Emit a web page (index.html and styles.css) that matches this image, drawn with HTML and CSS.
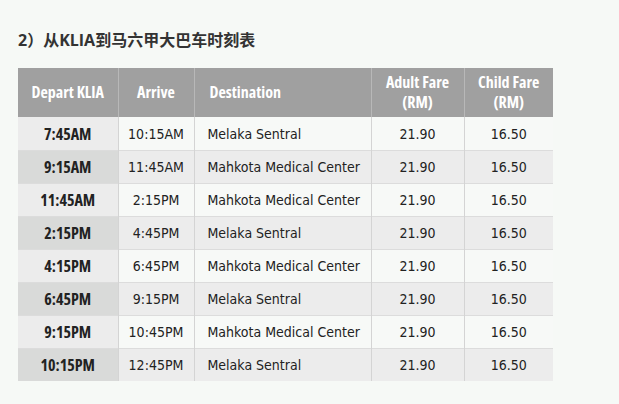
FILE: index.html
```html
<!DOCTYPE html>
<html lang="zh">
<head>
<meta charset="utf-8">
<link rel="stylesheet" href="styles.css">
</head>
<body>
<h2 class="title">2）从KLIA到马六甲大巴车时刻表</h2>
<table class="sched">
  <colgroup>
    <col class="c1"><col class="c2"><col class="c3"><col class="c4"><col class="c5">
  </colgroup>
  <thead>
    <tr>
      <th>Depart KLIA</th>
      <th>Arrive</th>
      <th class="left">Destination</th>
      <th>Adult Fare<br>(RM)</th>
      <th>Child Fare<br>(RM)</th>
    </tr>
  </thead>
  <tbody>
    <tr><td class="dep">7:45AM</td><td>10:15AM</td><td class="left">Melaka Sentral</td><td>21.90</td><td>16.50</td></tr>
    <tr><td class="dep">9:15AM</td><td>11:45AM</td><td class="left">Mahkota Medical Center</td><td>21.90</td><td>16.50</td></tr>
    <tr><td class="dep">11:45AM</td><td>2:15PM</td><td class="left">Mahkota Medical Center</td><td>21.90</td><td>16.50</td></tr>
    <tr><td class="dep">2:15PM</td><td>4:45PM</td><td class="left">Melaka Sentral</td><td>21.90</td><td>16.50</td></tr>
    <tr><td class="dep">4:15PM</td><td>6:45PM</td><td class="left">Mahkota Medical Center</td><td>21.90</td><td>16.50</td></tr>
    <tr><td class="dep">6:45PM</td><td>9:15PM</td><td class="left">Melaka Sentral</td><td>21.90</td><td>16.50</td></tr>
    <tr><td class="dep">9:15PM</td><td>10:45PM</td><td class="left">Mahkota Medical Center</td><td>21.90</td><td>16.50</td></tr>
    <tr><td class="dep">10:15PM</td><td>12:45PM</td><td class="left">Melaka Sentral</td><td>21.90</td><td>16.50</td></tr>
  </tbody>
</table>
</body>
</html>
```
FILE: styles.css
```css
html, body {
  margin: 0;
  padding: 0;
  background: #f6f9f6;
}
body {
  padding: 30px 0 0 18px;
  font-family: "DejaVu Sans Condensed", "DejaVu Sans", sans-serif;
  color: #222;
}
.title {
  margin: 0 0 18px 0;
  font-family: "Open Sans", "Noto Sans CJK SC", sans-serif;
  font-size: 16px;
  line-height: 20px;
  font-weight: 700;
  color: #333;
}
.sched {
  border-collapse: collapse;
  table-layout: fixed;
  width: 535px;
}
.c1 { width: 100px; }
.c2 { width: 76px; }
.c3 { width: 177px; }
.c4 { width: 93px; }
.c5 { width: 89px; }
.sched th {
  background: #a0a0a0;
  color: #fff;
  font-family: "Open Sans", sans-serif;
  font-stretch: 75%;
  font-weight: 700;
  font-size: 16px;
  line-height: 20px;
  height: 47px;
  padding: 0 0 2px 0;
  text-align: center;
  border-left: 1px solid #b8b8b8;
  border-right: 1px solid #b8b8b8;
}
.sched th:first-child { border-left: none; }
.sched th:last-child { border-right: none; }
.sched td {
  height: 32px;
  padding: 0;
  text-align: center;
  font-size: 14px;
  color: #222;
  background: #f7f9f7;
  border-top: 1px solid #dcdcdc;
  border-left: 1px solid #d4d4d4;
  border-right: 1px solid #d4d4d4;
}
.sched td:first-child { border-left: none; }
.sched td:last-child { border-right: none; }
.sched tbody tr:first-child td { border-top: none; height: 33px; }
.sched tbody tr:nth-child(even) td { background: #ececec; }
.sched td.dep {
  background: #ececec;
  font-family: "Open Sans", sans-serif;
  font-stretch: 75%;
  font-weight: 700;
  font-size: 16px;
  color: #222;
}
.sched tbody tr:nth-child(even) td.dep { background: #d9dad9; }
.sched .left { text-align: left; padding-left: 13px; }
.sched th.left { padding-left: 15px; }
```
